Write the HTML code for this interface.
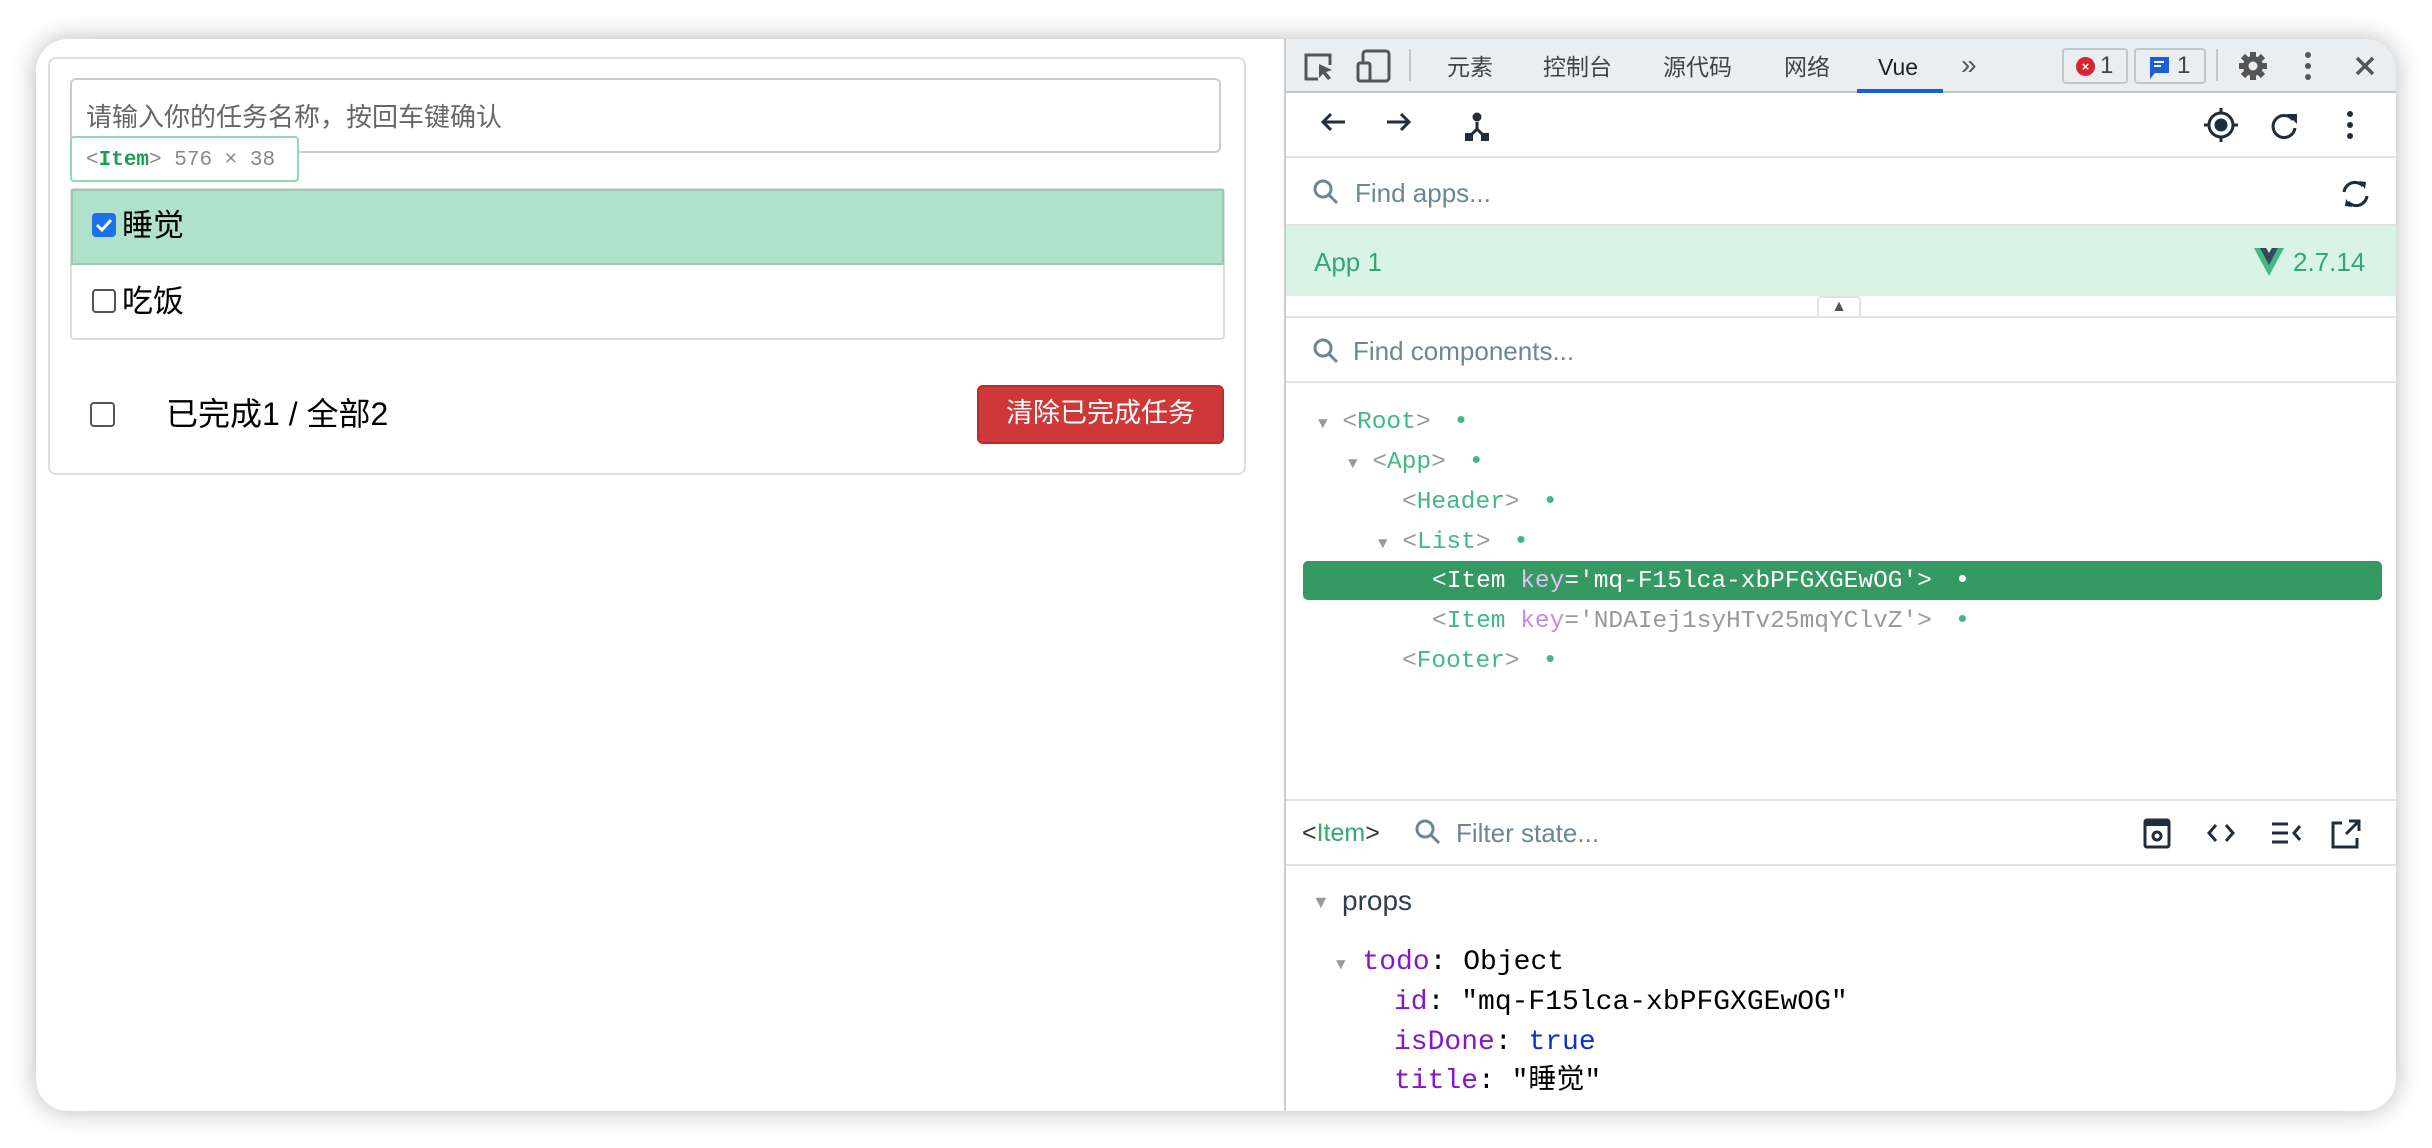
<!DOCTYPE html>
<html><head><meta charset="utf-8">
<style>
*{box-sizing:border-box;margin:0;padding:0}
body{width:2432px;height:1148px;background:#fff;position:relative;overflow:hidden;font-family:"Liberation Sans","Noto Sans CJK SC",sans-serif}
.a{position:absolute}
#win{position:absolute;left:36px;top:39px;width:2360px;height:1072px;border-radius:32px;background:#fff;box-shadow:0 0 26px rgba(0,0,0,.28);overflow:hidden}
.mono{font-family:"Liberation Mono","Noto Sans CJK SC",monospace}
.g{color:#42b883}.gr{color:#999}.k{color:#c58ae6}
.row{position:absolute;white-space:nowrap;font-size:24.5px;line-height:40px}
.dot{color:#42b883;font-size:26px;margin-left:8px}
.tri{color:#999;font-size:16px}
.hl{border-bottom:2px solid #e3e3e6}
.p{color:#8616c8}
</style></head><body>
<div id="win">
<!-- left page -->
<div class="a" style="left:12px;top:18px;width:1198px;height:418px;border:2px solid #ddd;border-radius:8px"></div>
<div class="a" style="left:34px;top:39px;width:1151px;height:75px;border:2px solid #ccc;border-radius:6px"></div>
<div class="a" style="left:50px;top:60px;font-size:26px;color:#666;line-height:36px">请输入你的任务名称，按回车键确认</div>
<div class="a" style="left:34px;top:97px;width:229px;height:46px;border:2px solid #8fd9b4;border-radius:4px;background:#fff;font-size:21px;line-height:42px;padding-left:14px;color:#888"><span class="mono">&lt;<b style="color:#1a9e52">Item</b>&gt; 576 × 38</span></div>
<div class="a" style="left:34px;top:149px;width:1155px;height:152px;border:2px solid #ddd;border-radius:4px"></div>
<div class="a" style="left:35px;top:150px;width:1153px;height:76px;background:#b1e1ca;border:2px solid #9cc8b3"></div>
<div class="a" style="left:56px;top:174px;width:24px;height:24px;background:#1a73e8;border-radius:4px"><svg width="24" height="24"><path d="M5 12l5 5 9-10" stroke="#fff" stroke-width="3" fill="none"/></svg></div>
<div class="a" style="left:86px;top:167px;font-size:31px;line-height:40px">睡觉</div>
<div class="a" style="left:56px;top:250px;width:24px;height:24px;border:2px solid #555;border-radius:4px;background:#fff"></div>
<div class="a" style="left:86px;top:243px;font-size:31px;line-height:40px">吃饭</div>
<div class="a" style="left:54px;top:363px;width:25px;height:25px;border:2px solid #555;border-radius:4px"></div>
<div class="a" style="left:130px;top:355px;font-size:32px;line-height:40px">已完成1 / 全部2</div>
<div class="a" style="left:941px;top:346px;width:247px;height:59px;background:#cf3838;border:2px solid #b82c2c;border-radius:6px;color:#fff;font-size:27px;text-align:center;line-height:53px">清除已完成任务</div>
<!-- divider -->
<div class="a" style="left:1248px;top:0;width:2px;height:1072px;background:#ccc"></div>
<!-- devtools -->
<div class="a" style="left:1250px;top:0;width:1110px;height:54px;background:#ebeef0;border-bottom:2px solid #c4c7c9"></div>
<svg class="a" style="left:1266px;top:10px" width="100" height="34"><path d="M16 30H4V6h24v10" stroke="#555" stroke-width="3" fill="none"/><path d="M17 15l13 6-6 2 5 6-3 2-5-6-4 4z" fill="#555"/><rect x="61" y="2" width="26" height="30" rx="3" stroke="#555" stroke-width="3" fill="none"/><rect x="56" y="14" width="12" height="18" rx="2" stroke="#555" stroke-width="3" fill="#ebeef0"/></svg>
<div class="a" style="left:1373px;top:10px;width:2px;height:32px;background:#c4c7c9"></div>
<div class="a" style="top:10px;left:1411px;font-size:23px;line-height:36px;color:#444;white-space:nowrap">元素</div>
<div class="a" style="top:10px;left:1507px;font-size:23px;line-height:36px;color:#444">控制台</div>
<div class="a" style="top:10px;left:1627px;font-size:23px;line-height:36px;color:#444">源代码</div>
<div class="a" style="top:10px;left:1748px;font-size:23px;line-height:36px;color:#444">网络</div>
<div class="a" style="top:10px;left:1842px;font-size:23px;line-height:36px;color:#222">Vue</div>
<div class="a" style="left:1821px;top:50px;width:86px;height:4px;background:#1a5fd8"></div>
<div class="a" style="top:8px;left:1925px;font-size:28px;line-height:36px;color:#555">»</div>
<div class="a" style="left:2026px;top:9px;width:66px;height:36px;border:2px solid #c4c7c9;border-radius:4px"></div>
<div class="a" style="left:2040px;top:18px;width:19px;height:19px;border-radius:10px;background:#d9252f;color:#fff;font-size:13px;text-align:center;line-height:19px;font-weight:bold">×</div>
<div class="a" style="left:2064px;top:13px;font-size:24px;color:#444;line-height:28px">1</div>
<div class="a" style="left:2098px;top:9px;width:72px;height:36px;border:2px solid #c4c7c9;border-radius:4px"></div>
<svg class="a" style="left:2112px;top:16px" width="24" height="26"><path d="M2 2h19v16H7l-5 6z" fill="#1a5fd8"/><path d="M6 7h10M6 11h7" stroke="#fff" stroke-width="2"/></svg>
<div class="a" style="left:2141px;top:13px;font-size:24px;color:#444;line-height:28px">1</div>
<div class="a" style="left:2180px;top:10px;width:2px;height:32px;background:#c4c7c9"></div>
<svg class="a" style="left:2202px;top:12px" width="30" height="30"><g fill="#555"><circle cx="15" cy="15" r="10"/><g stroke="#555" stroke-width="6"><path d="M15 1v28M1 15h28M5 5l20 20M25 5L5 25"/></g></g><circle cx="15" cy="15" r="4.5" fill="#ebeef0"/></svg>
<svg class="a" style="left:2267px;top:11px" width="10" height="32"><circle cx="5" cy="5" r="3" fill="#555"/><circle cx="5" cy="16" r="3" fill="#555"/><circle cx="5" cy="27" r="3" fill="#555"/></svg>
<svg class="a" style="left:2318px;top:16px" width="22" height="22"><path d="M3 3l16 16M19 3L3 19" stroke="#555" stroke-width="3.5"/></svg>
<!-- toolbar -->
<div class="a hl" style="left:1250px;top:54px;width:1110px;height:65px"></div>
<svg class="a" style="left:1283px;top:72px" width="200" height="32"><g stroke="#1f2d3d" stroke-width="3" fill="none"><path d="M26 11H4M12 3L4 11l8 8"/><path d="M68 11h22M82 3l8 8-8 8"/><path d="M158 11v7l-8 8M158 18l8 8"/></g><circle cx="158" cy="6" r="4.5" fill="#1f2d3d"/><rect x="146" y="22" width="8" height="8" fill="#1f2d3d"/><rect x="162" y="22" width="8" height="8" fill="#1f2d3d"/></svg>
<svg class="a" style="left:2167px;top:68px" width="160" height="40"><g stroke="#1f2d3d" stroke-width="3" fill="none"><circle cx="18" cy="18" r="12"/><path d="M18 1v5M18 30v5M1 18h5M30 18h5"/><path d="M90 13a11 11 0 1 0 2 8"/></g><circle cx="18" cy="18" r="6.5" fill="#1f2d3d"/><path d="M84 7h10v10z" fill="#1f2d3d"/><circle cx="147" cy="7" r="3" fill="#1f2d3d"/><circle cx="147" cy="18" r="3" fill="#1f2d3d"/><circle cx="147" cy="29" r="3" fill="#1f2d3d"/></svg>
<!-- find apps -->
<svg class="a" style="left:1276px;top:139px" width="30" height="30"><circle cx="11" cy="11" r="8" stroke="#6b8796" stroke-width="3" fill="none"/><path d="M17 17l8 8" stroke="#6b8796" stroke-width="3"/></svg>
<div class="a" style="left:1319px;top:136px;font-size:26px;line-height:36px;color:#6b8796">Find apps...</div>
<svg class="a" style="left:2303px;top:138px" width="34" height="34"><g stroke="#1f2d3d" stroke-width="3" fill="none"><path d="M5 15a11 11 0 0 1 19-6"/><path d="M28 19a11 11 0 0 1-19 6"/></g><path d="M20 4l7 1-1 7z M13 30l-7-1 1-7z" fill="#1f2d3d"/></svg>
<div class="a" style="left:1250px;top:185px;width:1110px;height:2px;background:#e3e3e6"></div>
<div class="a" style="left:1250px;top:187px;width:1110px;height:70px;background:#d9f4e7"></div>
<div class="a" style="left:1278px;top:205px;font-size:26px;line-height:36px;color:#34a870">App 1</div>
<svg class="a" style="left:2218px;top:209px" width="30" height="28"><path d="M0 0h12l3 5 3-5h12L15 28z" fill="#42b883"/><path d="M6 0h6l3 5 3-5h6L15 17z" fill="#35495e"/></svg>
<div class="a" style="left:2257px;top:205px;font-size:26px;line-height:36px;color:#34a870">2.7.14</div>
<div class="a" style="left:1250px;top:277px;width:1110px;height:2px;background:#e3e3e6"></div>
<div class="a" style="left:1781px;top:257px;width:44px;height:20px;border:2px solid #e3e3e6;border-bottom:none;border-radius:4px 4px 0 0;background:#fff;color:#555;font-size:16px;text-align:center;line-height:18px">▲</div>
<svg class="a" style="left:1276px;top:298px" width="30" height="30"><circle cx="11" cy="11" r="8" stroke="#6b8796" stroke-width="3" fill="none"/><path d="M17 17l8 8" stroke="#6b8796" stroke-width="3"/></svg>
<div class="a" style="left:1317px;top:294px;font-size:26px;line-height:36px;color:#6b8796">Find components...</div>
<div class="a" style="left:1250px;top:342px;width:1110px;height:2px;background:#e3e3e6"></div>
<!-- tree -->
<div class="row mono" style="left:1282px;top:362px"><span class="tri">▼</span> <span class="gr">&lt;</span><span class="g">Root</span><span class="gr">&gt;</span> <span class="dot">•</span></div>
<div class="row mono" style="left:1312px;top:402px"><span class="tri">▼</span> <span class="gr">&lt;</span><span class="g">App</span><span class="gr">&gt;</span> <span class="dot">•</span></div>
<div class="row mono" style="left:1366px;top:442px"><span class="gr">&lt;</span><span class="g">Header</span><span class="gr">&gt;</span> <span class="dot">•</span></div>
<div class="row mono" style="left:1342px;top:482px"><span class="tri">▼</span> <span class="gr">&lt;</span><span class="g">List</span><span class="gr">&gt;</span> <span class="dot">•</span></div>
<div class="a" style="left:1267px;top:522px;width:1079px;height:39px;background:#349a62;border-radius:5px"></div>
<div class="row mono" style="left:1396px;top:521px;color:#fff">&lt;Item <span style="color:#e0c0f5">key</span>='mq-F15lca-xbPFGXGEwOG'&gt; <span style="font-size:26px;margin-left:8px">•</span></div>
<div class="row mono" style="left:1396px;top:561px"><span class="gr">&lt;</span><span class="g">Item</span> <span class="k">key</span><span class="gr">='NDAIej1syHTv25mqYClvZ'&gt;</span> <span class="dot">•</span></div>
<div class="row mono" style="left:1366px;top:601px"><span class="gr">&lt;</span><span class="g">Footer</span><span class="gr">&gt;</span> <span class="dot">•</span></div>
<!-- bottom pane -->
<div class="a" style="left:1250px;top:760px;width:1110px;height:2px;background:#e3e3e6"></div>
<div class="a" style="left:1266px;top:776px;font-size:25px;line-height:36px;color:#333">&lt;<span style="color:#34a870">Item</span>&gt;</div>
<svg class="a" style="left:1378px;top:779px" width="30" height="30"><circle cx="11" cy="11" r="8" stroke="#6b8796" stroke-width="3" fill="none"/><path d="M17 17l8 8" stroke="#6b8796" stroke-width="3"/></svg>
<div class="a" style="left:1420px;top:776px;font-size:26px;line-height:36px;color:#6b8796">Filter state...</div>
<svg class="a" style="left:2106px;top:778px" width="230" height="34"><g stroke="#1f2d3d" stroke-width="3" fill="none"><rect x="3" y="3" width="24" height="27" rx="2"/><circle cx="15" cy="19" r="4"/><path d="M74 8l-7 8 7 8M84 8l7 8-7 8"/><path d="M130 7h16M130 16h16M130 25h16M158 9l-6 7 6 7"/><path d="M207 4h10v10M217 4L204 17M200 6h-9v24h24v-9"/></g><rect x="3" y="3" width="24" height="6" fill="#1f2d3d"/></svg>
<div class="a" style="left:1250px;top:825px;width:1110px;height:2px;background:#e3e3e6"></div>
<div class="a" style="left:1276px;top:845px;font-size:18px;color:#999;line-height:36px">▼</div>
<div class="a" style="left:1306px;top:843px;font-size:28px;line-height:38px;color:#2c3e50">props</div>
<div class="row mono" style="left:1300px;top:904px;font-size:28px"><span class="tri">▼</span> <span class="p">todo</span>: Object</div>
<div class="row mono" style="left:1358px;top:944px;font-size:28px"><span class="p">id</span>: "mq-F15lca-xbPFGXGEwOG"</div>
<div class="row mono" style="left:1358px;top:984px;font-size:28px"><span class="p">isDone</span>: <span style="color:#0f2fc6">true</span></div>
<div class="row mono" style="left:1358px;top:1023px;font-size:28px"><span class="p">title</span>: "睡觉"</div>
</div>
</body></html>
